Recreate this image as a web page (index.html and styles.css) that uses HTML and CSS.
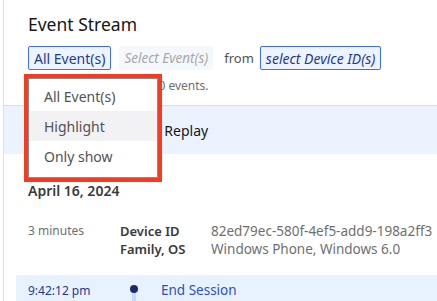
FILE: index.html
```html
<!DOCTYPE html>
<html lang="en">
<head>
<meta charset="utf-8">
<title>Event Stream</title>
<link rel="stylesheet" href="styles.css">
</head>
<body>
<div class="page">
  <header class="head">
    <h1 class="title">Event Stream</h1>
    <div class="filters">
      <span class="chip chip-active">All Event(s)</span>
      <span class="chip chip-muted">Select Event(s)</span>
      <span class="from">from</span>
      <span class="chip chip-active chip-italic">select Device ID(s)</span>
    </div>
    <p class="summary">Showing 1 - 100 of 1,250 events.</p>
  </header>

  <div class="band">
    <svg class="play" width="14" height="14" viewBox="0 0 14 14"><path d="M3 2l9 5-9 5z" fill="#161616"/></svg>
    <span>Session Replay</span>
  </div>

  <section class="day">
    <h2 class="date">April 16, 2024</h2>
    <div class="meta">
      <span class="duration">3 minutes</span>
      <div class="keys">
        <span>Device ID</span>
        <span>Family, OS</span>
      </div>
      <div class="vals">
        <span>82ed79ec-580f-4ef5-add9-198a2ff3</span>
        <span>Windows Phone, Windows 6.0</span>
      </div>
    </div>
  </section>

  <div class="event">
    <span class="time">9:42:12 pm</span>
    <span class="rail"><span class="dot"></span></span>
    <span class="ev-name">End Session</span>
  </div>

  <div class="annot">
    <ul class="menu">
      <li class="item">All Event(s)</li>
      <li class="item item-hover">Highlight</li>
      <li class="item">Only show</li>
    </ul>
  </div>
</div>
</body>
</html>
```

FILE: styles.css
```css
* { box-sizing: border-box; }
html, body { margin: 0; padding: 0; background: #fff; }
body {
  font-family: "Noto Sans", "DejaVu Sans", sans-serif;
  color: #161616;
  width: 437px;
  height: 301px;
  overflow: hidden;
}
.page {
  position: relative;
  margin-left: 3px;
  border-left: 1px solid #e0e0e0;
  min-height: 301px;
}
.head { padding: 12px 0 0 24px; }
.title {
  margin: 0;
  font-size: 17.5px;
  line-height: 24px;
  font-weight: 400;
  color: #161616;
}
.filters {
  display: flex;
  align-items: center;
  margin-top: 10px;
  height: 24px;
}
.chip {
  display: inline-flex;
  align-items: center;
  height: 24px;
  padding: 0 5px;
  font-size: 14px;
  border: 1px solid transparent;
  border-radius: 2px;
  white-space: nowrap;
}
.chip-active {
  background: #edf4ff;
  border-color: #3f6fe3;
  color: #1f3a93;
}
.chip-italic { font-style: italic; }
.chip-muted {
  margin-left: 8px;
  padding: 0 4px;
  font-size: 13.5px;
  background: #f4f7fb;
  color: #a8a8a8;
  font-style: italic;
}
.from {
  margin: 0 6px 0 11px;
  font-size: 13px;
  color: #525252;
}
.summary {
  margin: 8px 0 0;
  font-size: 12px;
  line-height: 16px;
  color: #6f6f6f;
  white-space: nowrap;
}
.band {
  margin-top: 11px;
  height: 49px;
  border-top: 1px solid #dcdcdc;
  background: #eaf3ff;
  display: flex;
  align-items: center;
  gap: 6px;
  padding-left: 87px;
  font-size: 14px;
  color: #161616;
}
.day { padding: 0 0 0 24px; }
.date {
  margin: 28px 0 0;
  font-size: 14px;
  line-height: 18px;
  font-weight: 600;
  color: #393939;
}
.meta {
  display: grid;
  grid-template-columns: 92px 91px 1fr;
  margin-top: 22px;
  white-space: nowrap;
}
.duration { font-size: 12px; line-height: 18px; color: #6f6f6f; }
.keys, .vals { display: flex; flex-direction: column; line-height: 18px; }
.keys { font-size: 13px; font-weight: 600; color: #393939; }
.vals { font-size: 13.5px; color: #6f6f6f; overflow: hidden; }
.event {
  margin: 17px 0 0 12px;
  height: 30px;
  background: #e8f2ff;
  display: flex;
  align-items: center;
  padding-left: 12px;
  position: relative;
}
.time { width: 101px; font-size: 12px; color: #1f3a93; }
.rail {
  position: relative;
  width: 10px;
  align-self: stretch;
  display: flex;
  justify-content: center;
}
.rail::after {
  content: "";
  position: absolute;
  left: 3px;
  top: 18px;
  bottom: 0;
  width: 4px;
  background: #c3dafc;
}
.dot {
  margin-top: 10px;
  width: 8px;
  height: 8px;
  border-radius: 50%;
  background: #1a2a6c;
}
.ev-name { margin-left: 22px; font-size: 13.5px; color: #2c4fc0; }
.annot {
  position: absolute;
  left: 20px;
  top: 74px;
  width: 138px;
  height: 108px;
  border: 4px solid #f73a22;
}
.menu {
  list-style: none;
  margin: 0;
  padding: 2px 0 0;
  height: 100%;
  background: #fff;
  border: 1px solid #8d8d8d;
}
.item {
  height: 30px;
  display: flex;
  align-items: center;
  padding-left: 15px;
  font-size: 14px;
  color: #525252;
}
.item-hover { background: #f2f2f4; }
```
